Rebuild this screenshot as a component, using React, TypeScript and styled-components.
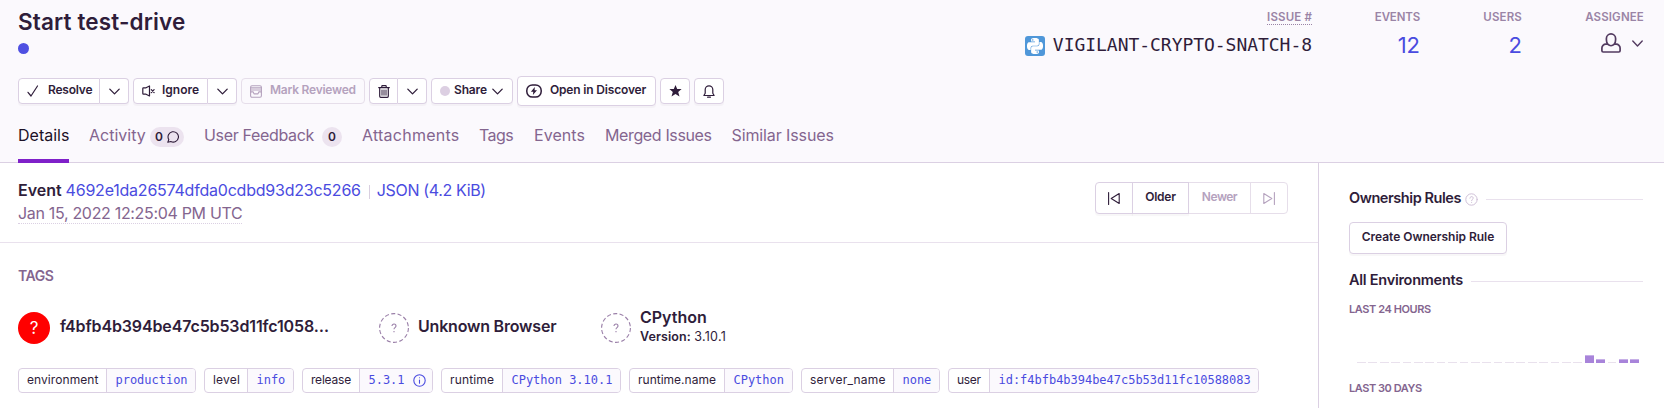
import React from 'react';
import styled, { createGlobalStyle, css } from 'styled-components';
import { SiPython } from 'react-icons/si';

const color = {
  text: '#2f1d3a',
  sub: '#84658f',
  label: '#9a84a6',
  link: '#4a4be0',
  border: '#dbd0e3',
  inner: '#e9e1ed',
  surface: '#fbf9fd',
  active: '#7f20c9',
  disabled: '#b5a2be',
  bar: '#a884da',
};

const Global = createGlobalStyle`
  *, *::before, *::after { box-sizing: border-box; }
  body { margin: 0; background: #fff; overflow: hidden; }
`;

const Page = styled.div`
  height: 408px;
  overflow: hidden;
  display: flex;
  flex-direction: column;
  font-family: Inter, 'Liberation Sans', sans-serif;
  font-size: 16px;
  color: ${color.text};
  white-space: nowrap;
`;

/* Letter spacing is tuned for each string. */
const Text = styled.span<{ $ls?: number }>`
  letter-spacing: ${(p) => p.$ls ?? 0}px;
`;

const Header = styled.header`
  flex: none;
  height: 163px;
  padding: 7px 20px 0 18px;
  display: flex;
  justify-content: space-between;
  background: ${color.surface};
  border-bottom: 1px solid ${color.border};
`;

const HeaderMain = styled.div`
  display: flex;
  flex-direction: column;
  > * { flex: none; }
`;

const Title = styled.h1`
  margin: 0;
  padding-top: 1px;
  height: 28px;
  font-size: 22.5px;
  line-height: 28px;
  font-weight: 600;
  letter-spacing: 0.14px;
`;

const LevelDot = styled.div`
  width: 11px;
  height: 11px;
  margin-top: 8px;
  border-radius: 50%;
  background: #4f50e2;
`;

const Toolbar = styled.div`
  display: flex;
  align-items: center;
  gap: 4px;
  height: 30px;
  margin-top: 22px;
`;

const Button = styled.button<{ $w: number; $h?: number; $disabled?: boolean }>`
  display: flex;
  align-items: center;
  flex: none;
  width: ${(p) => p.$w}px;
  height: ${(p) => p.$h ?? 26}px;
  padding: 0;
  border: 1px solid ${color.border};
  border-radius: 4px;
  background: #fff;
  font: 600 12px/16px Inter, 'Liberation Sans', sans-serif;
  color: ${color.text};
  box-shadow: 0 2px 1px rgba(47, 29, 58, 0.035);
  ${(p) =>
    p.$disabled &&
    css`
      color: ${color.disabled};
      border-color: #e6deea;
      background: transparent;
      box-shadow: none;
    `}
  svg { flex: none; }
`;

const ButtonText = styled(Text)<{ $gap?: number }>`
  margin-left: ${(p) => p.$gap ?? 0}px;
  padding-bottom: 2px;
`;

const Split = styled.div`
  display: flex;
  ${Button}:first-child { border-radius: 4px 0 0 4px; }
  ${Button}:last-child { border-radius: 0 4px 4px 0; border-left: 0; }
`;

const LeadButton = styled(Button)<{ $pad: number }>`
  padding-left: ${(p) => p.$pad}px;
`;

const ShareButton = styled(LeadButton)`
  svg { margin-left: 5px; }
`;

const IconButton = styled(Button)`
  justify-content: center;
`;

const ShareDot = styled.i`
  width: 10px;
  height: 10px;
  border-radius: 50%;
  background: #dccfe2;
`;

const Tabs = styled.nav`
  display: flex;
  gap: 20px;
  margin-top: 17px;
`;

const Tab = styled.a<{ $w: number; $active?: boolean }>`
  display: flex;
  justify-content: space-between;
  width: ${(p) => p.$w}px;
  height: 40px;
  line-height: 24px;
  color: ${(p) => (p.$active ? '#1d1127' : color.sub)};
  border-bottom: 4px solid ${(p) => (p.$active ? color.active : 'transparent')};
`;

const Badge = styled.span<{ $w: number }>`
  display: flex;
  align-items: center;
  justify-content: center;
  gap: 4px;
  width: ${(p) => p.$w}px;
  height: 20px;
  margin-top: 4px;
  border-radius: 10px;
  background: #ece3ef;
  color: ${color.text};
  font-size: 12px;
  font-weight: 600;
  line-height: 18px;
`;

const Stats = styled.div`
  display: flex;
  gap: 61px;
  padding-top: 2px;
`;

const Stat = styled.div<{ $w?: number }>`
  display: flex;
  flex-direction: column;
  align-items: flex-end;
  ${(p) => p.$w && `width: ${p.$w}px;`}
`;

const StatLabel = styled.div<{ $dotted?: boolean; $ls: number }>`
  height: 16px;
  font-size: 11.5px;
  line-height: 16px;
  font-weight: 600;
  letter-spacing: ${(p) => p.$ls}px;
  color: ${color.label};
  border-bottom: ${(p) => (p.$dotted ? `1px dotted ${color.label}` : '0')};
`;

const StatValue = styled.div`
  display: flex;
  align-items: center;
  margin-top: 6px;
  height: 28px;
  font-size: 22px;
  line-height: 28px;
  color: ${color.link};
`;

const ShortId = styled.span`
  margin-left: 8px;
  font-family: 'DejaVu Sans Mono', monospace;
  font-size: 18px;
  letter-spacing: -0.04px;
  color: ${color.text};
`;

const Platform = styled.span`
  display: flex;
  align-items: center;
  justify-content: center;
  width: 20px;
  height: 20px;
  margin-top: 1px;
  border-radius: 3px;
  background: #4f97d9;
  color: #fff;
`;

const Assignee = styled.div`
  display: flex;
  align-items: center;
  gap: 11px;
  margin: 8px 1px 0 0;
  color: #533b60;
`;

const Body = styled.div`
  flex: 1;
  display: flex;
  min-height: 0;
`;

const Main = styled.main`
  width: 1318px;
`;

const EventBar = styled.section`
  display: flex;
  justify-content: space-between;
  height: 80px;
  padding: 16px 30px 0 18px;
  border-bottom: 1px solid ${color.inner};
`;

const EventLine = styled.div`
  display: flex;
  line-height: 23px;
`;

const Strong = styled(Text)`
  font-weight: 600;
`;

const EventLink = styled(Text)`
  color: ${color.link};
  margin-left: 4px;
`;

const Pipe = styled.i`
  width: 1px;
  height: 14px;
  margin: 6px 3px 0 8px;
  background: #d9cfe0;
`;

const EventDate = styled.div`
  width: fit-content;
  height: 22px;
  line-height: 23px;
  letter-spacing: -0.32px;
  color: ${color.sub};
  border-bottom: 1px dotted #dbd0e3;
`;

const Pager = styled.div`
  display: flex;
  margin-top: 3px;
  ${Button} { border-radius: 0; margin-left: -1px; justify-content: center; }
  ${Button}:first-child { border-radius: 4px 0 0 4px; margin-left: 0; }
  ${Button}:nth-child(2) { z-index: 1; }
  ${Button}:last-child { border-radius: 0 4px 4px 0; }
`;

const TagsSection = styled.section`
  padding: 25px 0 0 18px;
`;

const TagsTitle = styled.h2`
  margin: 0;
  font-size: 14px;
  line-height: 16px;
  font-weight: 600;
  letter-spacing: -0.45px;
  color: ${color.sub};
`;

const Contexts = styled.div`
  display: flex;
  align-items: center;
  height: 32px;
  margin-top: 28px;
`;

const Context = styled.div<{ $w: number }>`
  display: flex;
  align-items: center;
  gap: 9px;
  width: ${(p) => p.$w}px;
`;

const UserAvatar = styled.div`
  width: 32px;
  height: 32px;
  margin-right: 1px;
  border-radius: 50%;
  background: #ff0000;
  color: #fff;
  font-size: 17px;
  line-height: 32px;
  text-align: center;
`;

const ContextName = styled.div<{ $ls?: number }>`
  font-size: 16px;
  line-height: 20px;
  font-weight: 600;
  margin-top: -4px;
  letter-spacing: ${(p) => p.$ls ?? 0}px;
`;

const ContextVersion = styled.div`
  font-size: 12.5px;
  line-height: 16px;
  padding-top: 2px;
`;

const Pills = styled.div`
  display: flex;
  gap: 8px;
  margin-top: 24px;
`;

const Pill = styled.div<{ $w: number }>`
  display: flex;
  width: ${(p) => p.$w}px;
  height: 25px;
  border: 1px solid ${color.border};
  border-radius: 4px;
  overflow: hidden;
  font-size: 12px;
`;

const PillKey = styled.div<{ $w: number; $ls: number }>`
  flex: none;
  width: ${(p) => p.$w}px;
  padding-left: 8px;
  line-height: 21px;
  border-right: 1px solid ${color.border};
  letter-spacing: ${(p) => p.$ls}px;
`;

const PillValue = styled.div`
  flex: 1;
  display: flex;
  align-items: center;
  gap: 8px;
  padding-left: 8.5px;
  background: ${color.surface};
  color: ${color.link};
  font-family: 'DejaVu Sans Mono', monospace;
  letter-spacing: -0.02px;
  line-height: 23px;
`;

const Sidebar = styled.aside`
  flex: 1;
  padding: 25px 21px 0 30px;
  border-left: 1px solid ${color.border};
`;

const SideHeading = styled.h3<{ $ls: number }>`
  display: flex;
  align-items: center;
  margin: 0;
  height: 20px;
  font-size: 14.5px;
  line-height: 20px;
  font-weight: 600;
  letter-spacing: ${(p) => p.$ls}px;
  svg { margin: 3px 0 0 4px; }
  &::after {
    content: '';
    flex: 1;
    height: 1px;
    margin: 2px 0 0 8px;
    background: ${color.inner};
  }
`;

const CreateRule = styled(Button)`
  justify-content: center;
  margin: 14px 0 16px;
`;

const SideLabel = styled.h4<{ $ls: number }>`
  margin: 0;
  font-size: 11px;
  line-height: 16px;
  font-weight: 600;
  letter-spacing: ${(p) => p.$ls}px;
  color: ${color.sub};
  ${SideHeading} + & { margin-top: 11px; }
`;

const Chart = styled.div`
  display: flex;
  align-items: flex-end;
  gap: 2.66px;
  height: 40px;
  margin: 6px 4px 17px 8px;
`;

const Bar = styled.div<{ $h: number }>`
  flex: 1;
  height: ${(p) => p.$h || 1}px;
  background: ${(p) => (p.$h ? color.bar : color.inner)};
  border-top: ${(p) => (p.$h ? '1px solid #c7b0e7' : '0')};
`;

const stroke = { fill: 'none', stroke: 'currentColor', strokeLinecap: 'round', strokeLinejoin: 'round' } as const;

const Chevron = ({ size = 11, w = 1.3 }: { size?: number; w?: number }) => (
  <svg width={size} height={size} viewBox="0 0 11 11" {...stroke} strokeWidth={w}>
    <path d="M.8 3.1 5.5 7.9l4.7-4.8" />
  </svg>
);

const Check = () => (
  <svg width="12" height="12" viewBox="0 0 12 12" {...stroke} strokeWidth="1.2">
    <path d="M1 7.3 4 11 10.5 1" />
  </svg>
);

const Mute = () => (
  <svg width="13" height="12" viewBox="0 0 13 12" {...stroke} strokeWidth="1.2">
    <path d="M4 2.8H1.4a.6.6 0 0 0-.6.6v5.2c0 .4.2.6.6.6H4M4 2.8 7.5 1v10L4 9.2" />
    <path d="M9.3 4.7l2.8 2.8M12.1 4.7 9.3 7.5" />
  </svg>
);

const Archive = () => (
  <svg width="12" height="13" viewBox="0 0 12 13" {...stroke} strokeWidth="1.1">
    <rect x=".6" y=".8" width="10.8" height="11.4" rx="1.4" />
    <path d="M.6 2.900h10.800M.6 5h10.800M.6 6.900h2.600l.8 2h4l.8-2h2.600" />
  </svg>
);

const Trash = () => (
  <svg width="12" height="13" viewBox="0 0 12 13" {...stroke} strokeWidth="1.2">
    <path d="M.7 2.6h10.6M3.8 2.4V1.3c0-.4.2-.6.6-.6h3.2c.4 0 .6.2.6.6v1.1M1.7 2.8v8.5c0 .6.4 1 1 1h6.6c.6 0 1-.4 1-1V2.8" />
    <path d="M4 5v5.2M6 5v5.2M8 5v5.2" strokeWidth="1" />
  </svg>
);

const Discover = () => (
  <svg width="16" height="14" viewBox="0 0 16 14" {...stroke} strokeWidth="1.5">
    <rect x=".8" y=".9" width="14.4" height="12.2" rx="5.6" />
    <path d="M8.8 3 4.9 7.7h2.4L6.9 11l4.1-4.8H8.6z" fill="currentColor" stroke="none" />
  </svg>
);

const Star = () => (
  <svg width="13" height="12" viewBox="0 0 13 12" fill="currentColor">
    <path d="M6.5 0 8.2 4h4.4L9.2 6.9l1.3 4.7-4-2.6-4 2.6 1.3-4.7L.4 4h4.4z" />
  </svg>
);

const Bell = () => (
  <svg width="12" height="13" viewBox="0 0 12 13" {...stroke} strokeWidth="1.2">
    <path d="M2.2 8.3V4.6a3.8 3.8 0 0 1 7.6 0v3.7l1.3 2.2H.9zM4.6 12.2h2.8" />
  </svg>
);

const Comment = () => (
  <svg width="12" height="12" viewBox="0 0 12 12" {...stroke} strokeWidth="1.1">
    <path d="M1.800 8.600A5.200 5.200 0 1 1 3.800 10.500L.8 11.300z" />
  </svg>
);

const Person = () => (
  <svg width="20" height="20" viewBox="0 0 20 20" {...stroke} strokeWidth="1.7">
    <path d="M6.9 11.4C5.8 10.3 5.4 8.700 5.400 6.700V5.500a4.600 4.600 0 0 1 9.200 0v1.200c0 2-.4 3.600-1.500 4.700-1.700 1.500-4.500 1.500-6.200 0z" />
    <path d="M6.600 11.200H4.800a3.900 3.900 0 0 0-3.900 3.900v2.600c0 .8.500 1.300 1.300 1.300h15.600c.8 0 1.300-.5 1.300-1.300v-2.600a3.900 3.900 0 0 0-3.900-3.900h-1.800" />
  </svg>
);

const Skip = ({ flip }: { flip?: boolean }) => (
  <svg width="12" height="13" viewBox="0 0 12 13" {...stroke} strokeWidth="1.1">
    <path d={flip ? 'M11.400.6v11.800M.8 1.500v10l8-5z' : 'M.6.6v11.800M11.200 1.500v10l-8-5z'} />
  </svg>
);

const Help = () => (
  <svg width="13" height="13" viewBox="0 0 13 13" {...stroke} stroke="#cfc0d7" strokeWidth="1">
    <circle cx="6.500" cy="6.500" r="5.700" />
    <path d="M4.900 5.200c0-2.200 3.300-2.100 3.300-.1 0 1.300-1.600 1.200-1.600 2.500M6.600 9.300v.2" />
  </svg>
);

const Info = () => (
  <svg width="13" height="13" viewBox="0 0 13 13" {...stroke} strokeWidth="1.1">
    <circle cx="6.500" cy="6.500" r="5.700" />
    <path d="M6.500 6v3.300M6.500 3.700v.1" />
  </svg>
);

const Unknown = () => (
  <svg width="30" height="30" viewBox="0 0 30 30" {...stroke} stroke="#9a7fa8" strokeLinecap="butt">
    <circle cx="15" cy="15" r="14.400" strokeWidth="1.100" strokeDasharray="4.100 2.360" />
    <path d="M13 13.100c0-2.800 4-2.600 4-.1 0 1.700-2 1.600-2 3.300M15 18v1.200" strokeWidth="1.100" />
  </svg>
);

const pills: { k: string; v: string; w: number; kw: number; ls: number; info?: boolean }[] = [
  { k: 'environment', v: 'production', w: 178, kw: 88, ls: 0.07 },
  { k: 'level', v: 'info', w: 90, kw: 43, ls: 0.21 },
  { k: 'release', v: '5.3.1', w: 131, kw: 57, ls: -0.2, info: true },
  { k: 'runtime', v: 'CPython 3.10.1', w: 180, kw: 61, ls: 0.16 },
  { k: 'runtime.name', v: 'CPython', w: 164, kw: 95, ls: 0.01 },
  { k: 'server_name', v: 'none', w: 139, kw: 92, ls: 0.22 },
  { k: 'user', v: 'id:f4bfb4b394be47c5b53d11fc10588083', w: 311, kw: 41, ls: -0.3 },
];

const hours = [0, 0, 0, 0, 0, 0, 0, 0, 0, 0, 0, 0, 0, 0, 0, 0, 0, 0, 0, 0, 8, 4, 0, 4, 4];

export default function App() {
  return (
    <Page>
      <Global />
      <Header>
        <HeaderMain>
          <Title>Start test-drive</Title>
          <LevelDot />
          <Toolbar>
            <Split>
              <LeadButton $w={82} $pad={8}><Check /><ButtonText $gap={9} $ls={-0.21}>Resolve</ButtonText></LeadButton>
              <IconButton $w={29}><Chevron /></IconButton>
            </Split>
            <Split>
              <LeadButton $w={75} $pad={8}><Mute /><ButtonText $gap={7} $ls={0}>Ignore</ButtonText></LeadButton>
              <IconButton $w={29}><Chevron /></IconButton>
            </Split>
            <LeadButton $w={124} $pad={8} $disabled><Archive /><ButtonText $gap={8} $ls={-0.24}>Mark Reviewed</ButtonText></LeadButton>
            <Split>
              <IconButton $w={29}><Trash /></IconButton>
              <IconButton $w={29}><Chevron /></IconButton>
            </Split>
            <ShareButton $w={82} $pad={8}>
              <ShareDot /><ButtonText $gap={4} $ls={-0.14}>Share</ButtonText><Chevron />
            </ShareButton>
            <LeadButton $w={139} $h={30} $pad={8}><Discover /><ButtonText $gap={8} $ls={-0.17}>Open in Discover</ButtonText></LeadButton>
            <IconButton $w={30}><Star /></IconButton>
            <IconButton $w={30}><Bell /></IconButton>
          </Toolbar>
          <Tabs>
            <Tab $w={51} $active><Text>Details</Text></Tab>
            <Tab $w={95}><Text>Activity</Text><Badge $w={34}>0<Comment /></Badge></Tab>
            <Tab $w={138}><Text $ls={-0.33}>User Feedback</Text><Badge $w={20}>0</Badge></Tab>
            <Tab $w={97}><Text $ls={0.24}>Attachments</Text></Tab>
            <Tab $w={35}><Text $ls={-0.6}>Tags</Text></Tab>
            <Tab $w={51}><Text $ls={0.07}>Events</Text></Tab>
            <Tab $w={106.500}><Text $ls={-0.37}>Merged Issues</Text></Tab>
            <Tab $w={103}><Text $ls={-0.11}>Similar Issues</Text></Tab>
          </Tabs>
        </HeaderMain>
        <Stats>
          <Stat>
            <StatLabel $dotted $ls={0.15}>ISSUE #</StatLabel>
            <StatValue><Platform><SiPython size={16} /></Platform><ShortId>VIGILANT-CRYPTO-SNATCH-8</ShortId></StatValue>
          </Stat>
          <Stat $w={47}>
            <StatLabel $ls={-0.16}>EVENTS</StatLabel>
            <StatValue>12</StatValue>
          </Stat>
          <Stat $w={41}>
            <StatLabel $ls={0.17}>USERS</StatLabel>
            <StatValue>2</StatValue>
          </Stat>
          <Stat $w={61}>
            <StatLabel $ls={0.15}>ASSIGNEE</StatLabel>
            <Assignee><Person /><Chevron w={1.4} /></Assignee>
          </Stat>
        </Stats>
      </Header>
      <Body>
        <Main>
          <EventBar>
            <div>
              <EventLine>
                <Strong $ls={-0.02}>Event</Strong>
                <EventLink $ls={-0.22}>4692e1da26574dfda0cdbd93d23c5266</EventLink>
                <Pipe />
                <EventLink $ls={-0.35}>JSON (4.2 KiB)</EventLink>
              </EventLine>
              <EventDate>Jan 15, 2022 12:25:04 PM UTC</EventDate>
            </div>
            <Pager>
              <Button $w={38} $h={32}><Skip /></Button>
              <Button $w={57} $h={32}><ButtonText $ls={-0.24}>Older</ButtonText></Button>
              <Button $w={63} $h={32} $disabled><ButtonText $ls={-0.5}>Newer</ButtonText></Button>
              <Button $w={38} $h={32} $disabled><Skip flip /></Button>
            </Pager>
          </EventBar>
          <TagsSection>
            <TagsTitle>TAGS</TagsTitle>
            <Contexts>
              <Context $w={361}>
                <UserAvatar>?</UserAvatar>
                <ContextName $ls={-0.13}>f4bfb4b394be47c5b53d11fc1058…</ContextName>
              </Context>
              <Context $w={222}>
                <Unknown />
                <ContextName $ls={-0.2}>Unknown Browser</ContextName>
              </Context>
              <Context $w={150}>
                <Unknown />
                <div>
                  <ContextName $ls={0}>CPython</ContextName>
                  <ContextVersion><Strong $ls={0.1}>Version: </Strong><Text $ls={0.3}>3.10.1</Text></ContextVersion>
                </div>
              </Context>
            </Contexts>
            <Pills>
              {pills.map((p) => (
                <Pill key={p.k} $w={p.w}>
                  <PillKey $w={p.kw} $ls={p.ls}>{p.k}</PillKey>
                  <PillValue>{p.v}{p.info && <Info />}</PillValue>
                </Pill>
              ))}
            </Pills>
          </TagsSection>
        </Main>
        <Sidebar>
          <SideHeading $ls={-0.44}>Ownership Rules<Help /></SideHeading>
          <CreateRule $w={158} $h={32}><ButtonText $ls={-0.03}>Create Ownership Rule</ButtonText></CreateRule>
          <SideHeading $ls={-0.26}>All Environments</SideHeading>
          <SideLabel $ls={-0.42}>LAST 24 HOURS</SideLabel>
          <Chart>{hours.map((h, i) => <Bar key={i} $h={h} />)}</Chart>
          <SideLabel $ls={-0.45}>LAST 30 DAYS</SideLabel>
        </Sidebar>
      </Body>
    </Page>
  );
}
